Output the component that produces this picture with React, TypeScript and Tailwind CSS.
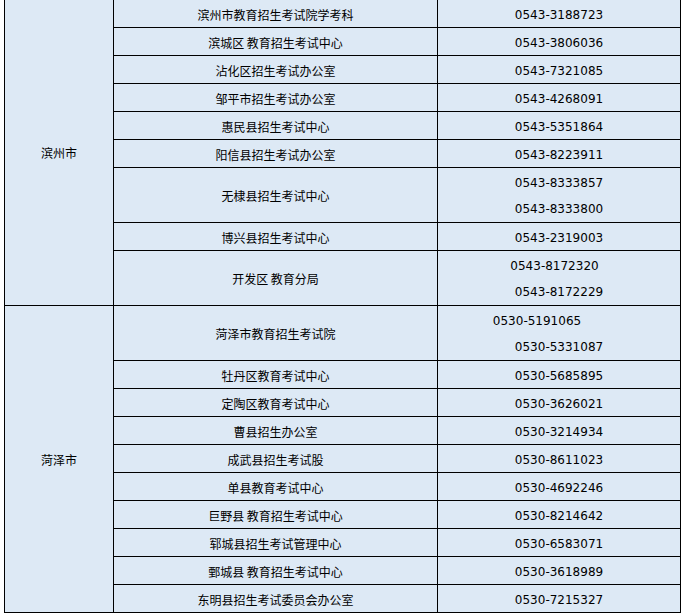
import React from "react"

type Row = { name: string; phones: { num: string; shift?: string }[]; h: string }

const CN = { fontFamily: '"Noto Sans CJK SC", "Noto Sans", sans-serif' }
const NUM = { fontFamily: '"DejaVu Sans", "Noto Sans", sans-serif' }

const BINZHOU: Row[] = [
  { name: "滨州市教育招生考试院学考科", phones: [{ num: "0543-3188723" }], h: "h-[27px]" },
  { name: "滨城区 教育招生考试中心", phones: [{ num: "0543-3806036" }], h: "h-[27px]" },
  { name: "沾化区招生考试办公室", phones: [{ num: "0543-7321085" }], h: "h-[27px]" },
  { name: "邹平市招生考试办公室", phones: [{ num: "0543-4268091" }], h: "h-[27px]" },
  { name: "惠民县招生考试中心", phones: [{ num: "0543-5351864" }], h: "h-[27px]" },
  { name: "阳信县招生考试办公室", phones: [{ num: "0543-8223911" }], h: "h-[27px]" },
  { name: "无棣县招生考试中心", phones: [{ num: "0543-8333857" }, { num: "0543-8333800" }], h: "h-[54px]" },
  { name: "博兴县招生考试中心", phones: [{ num: "0543-2319003" }], h: "h-[27px]" },
  { name: "开发区 教育分局", phones: [{ num: "0543-8172320", shift: "pr-[9px]" }, { num: "0543-8172229" }], h: "h-[54px]" },
]

const HEZE: Row[] = [
  { name: "菏泽市教育招生考试院", phones: [{ num: "0530-5191065", shift: "pr-[44px]" }, { num: "0530-5331087" }], h: "h-[54px]" },
  { name: "牡丹区教育考试中心", phones: [{ num: "0530-5685895" }], h: "h-[27px]" },
  { name: "定陶区教育考试中心", phones: [{ num: "0530-3626021" }], h: "h-[27px]" },
  { name: "曹县招生办公室", phones: [{ num: "0530-3214934" }], h: "h-[27px]" },
  { name: "成武县招生考试股", phones: [{ num: "0530-8611023" }], h: "h-[27px]" },
  { name: "单县教育考试中心", phones: [{ num: "0530-4692246" }], h: "h-[27px]" },
  { name: "巨野县 教育招生考试中心", phones: [{ num: "0530-8214642" }], h: "h-[27px]" },
  { name: "郓城县招生考试管理中心", phones: [{ num: "0530-6583071" }], h: "h-[27px]" },
  { name: "鄄城县 教育招生考试中心", phones: [{ num: "0530-3618989" }], h: "h-[27px]" },
  { name: "东明县招生考试委员会办公室", phones: [{ num: "0530-7215327" }], h: "h-[27px]" },
]

function Section({ city, rows }: { city: string; rows: Row[] }) {
  return (
    <div className="flex gap-px">
      <div className="w-[108px] shrink-0 bg-[#dde9f5] flex items-center justify-center pt-px text-[12px] text-black" style={CN}>
        {city}
      </div>
      <div className="flex flex-col gap-px">
        {rows.map((r, i) => (
          <div key={i} className={`flex gap-px ${r.h}`}>
            <div className="w-[323px] bg-[#dde9f5] flex items-center justify-center pt-[2px] text-[12px] text-black whitespace-pre" style={CN}>
              {r.name}
            </div>
            <div className="w-[242px] bg-[#dde9f5] flex flex-col justify-center pt-px text-[12px] text-black" style={NUM}>
              {r.phones.map((p, j) => (
                <div key={j} className={`h-[27px] flex items-center justify-center pt-px ${p.shift ?? ""}`}>
                  {p.num}
                </div>
              ))}
            </div>
          </div>
        ))}
      </div>
    </div>
  )
}

export default function App() {
  return (
    <div className="w-[683px] h-[616px] bg-white overflow-hidden">
      <div className="ml-[4px] w-[677px] bg-black px-px pb-px flex flex-col gap-px">
        <Section city="滨州市" rows={BINZHOU} />
        <Section city="菏泽市" rows={HEZE} />
      </div>
    </div>
  )
}
